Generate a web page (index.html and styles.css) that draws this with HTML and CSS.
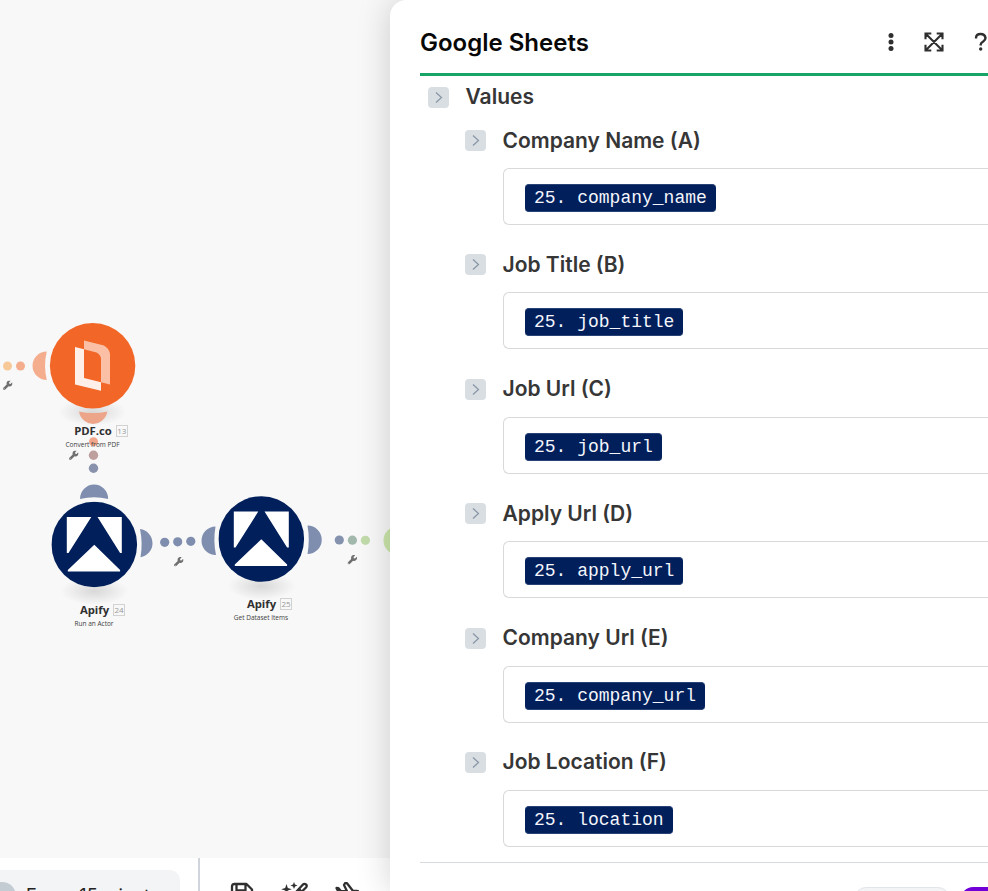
FILE: index.html
```html
<!DOCTYPE html>
<html lang="en">
<head>
<meta charset="utf-8">
<title>Scenario editor</title>
<link rel="stylesheet" href="styles.css">
</head>
<body>
<main class="workspace">
  <section class="editor">
    <div class="canvas">
      <svg class="graph" width="400" height="858" viewBox="0 0 400 858" aria-hidden="true">
        <defs>
          <radialGradient id="shade"><stop offset="0" stop-color="#000" stop-opacity=".13"/><stop offset="1" stop-color="#000" stop-opacity="0"/></radialGradient>
          <symbol id="wrench" viewBox="0 0 512 512"><path fill="#707070" d="M507 115c-3-12-19-15-27-7l-74 74-68-11-11-68 74-74c9-9 5-24-7-27C339-12 279 2 237 44c-45 45-58 110-38 167L22 388c-29 29-29 73 0 102s73 29 102 0l177-177c57 20 122 7 168-39 42-42 56-103 38-159zM64 472a24 24 0 1 1 0-48 24 24 0 0 1 0 48z"/></symbol>
          <symbol id="apify" viewBox="0 0 86 86"><circle cx="43" cy="43" r="42.8" fill="#001f5b"/><path fill="#fff" d="M15.500 15.500H40L17.200 51.500h-1.700zM46.200 15.500H70.500V51.500H68.800zM43 43.300L68.800 68.600V70H16.500V68.600z"/></symbol>
        </defs>
        <ellipse cx="92.500" cy="412" rx="34" ry="14" fill="url(#shade)"/>
        <ellipse cx="94.500" cy="591" rx="34" ry="14" fill="url(#shade)"/>
        <ellipse cx="261.500" cy="586" rx="34" ry="14" fill="url(#shade)"/>
        <circle cx="7.500" cy="366" r="4.500" fill="#f8c998"/>
        <circle cx="20.500" cy="366" r="4.500" fill="#f5ae8d"/>
        <path fill="#f5ae8d" d="M46.800 351.500a14.300 14.250 0 0 0 0 28.500q-3.500-14.200 0-28.500z"/>
        <path fill="#eda589" d="M79 411.500a14.300 14.500 0 0 0 28.300 0q-14 3-28.300 0z"/>
        <circle cx="93.500" cy="441.800" r="4.500" fill="#f1a58b"/>
        <circle cx="93.500" cy="455.200" r="4.700" fill="#bd9f9d"/>
        <circle cx="93.500" cy="468.200" r="4.700" fill="#8992ac"/>
        <path fill="#7f8eae" d="M80 499a14.100 14.500 0 0 1 28.200 0q-14-3.500-28.200 0z"/>
        <path fill="#7f8eae" d="M140 529a14.300 14.300 0 0 1 .5 28.300q2.500-14.200-.5-28.300z"/>
        <g fill="#7f8eae"><circle cx="164.700" cy="542.300" r="4.600"/><circle cx="177.700" cy="541.800" r="4.600"/><circle cx="190.800" cy="541.300" r="4.600"/></g>
        <path fill="#7f8eae" d="M215.500 526.500a14.200 14.200 0 0 0 .5 28.500q-3-14-.5-28.500z"/>
        <path fill="#7f8eae" d="M307.500 525.500a14.200 14.200 0 0 1 0 28.500q2.500-14.200 0-28.500z"/>
        <circle cx="339.300" cy="540" r="4.600" fill="#8492ad"/>
        <circle cx="352.400" cy="540.200" r="4.600" fill="#a2b8ad"/>
        <circle cx="365.400" cy="540.300" r="4.600" fill="#c1dbaa"/>
        <circle cx="397.500" cy="540.500" r="14" fill="#cbe6ab"/>
        <circle cx="92.600" cy="365.700" r="42.700" fill="#f26727"/>
        <path fill="#fff" fill-opacity=".9" d="M75 347l9 2.300V378l17 4.200v8.600L75 384.500z"/>
        <path fill="#fff" fill-opacity=".58" d="M84 340.500l20 5q6 4 6 9v30l-9-2.300V359q0-4-4.500-6.500L84 349.300z"/>
        <use href="#apify" x="51.300" y="501.500" width="86" height="86"/>
        <use href="#apify" x="218.300" y="496" width="86" height="86"/>
        <use href="#wrench" x="3" y="380.500" width="9.500" height="9.500"/>
        <use href="#wrench" x="69" y="450.500" width="9.500" height="9.500"/>
        <use href="#wrench" x="174" y="557" width="9.500" height="9.500"/>
        <use href="#wrench" x="347.500" y="555" width="9.500" height="9.500"/>
      </svg>
      <div class="caption caption-pdf"><h3>PDF.co <span>13</span></h3><p>Convert from PDF</p></div>
      <div class="caption caption-run"><h3>Apify <span>24</span></h3><p>Run an Actor</p></div>
      <div class="caption caption-get"><h3>Apify <span>25</span></h3><p>Get Dataset Items</p></div>
    </div>
    <footer class="toolbar">
      <div class="schedule"><i class="toggle"></i><span>Every 15 minutes</span></div>
      <div class="tools">
        <svg viewBox="0 0 24 24"><path d="M4.500 2h12L22 7.500v12q0 2.500-2.500 2.500h-15Q2 22 2 19.500v-15Q2 2 4.500 2zM6.500 2v6.500h9V2"/></svg>
        <svg class="wand" viewBox="0 0 28 24"><path d="M3 23L22 2.500q1.500-1.200 3 0t0 3L7 23M18 7l3 3"/><path class="solid" d="M5.500 2l1.300 4 4 1.300-4 1.300-1.300 4-1.300-4-4-1.300 4-1.300zM13 0l1 2.500 2.500 1-2.500 1-1 2.500-1-2.500-2.500-1 2.500-1z"/></svg>
        <svg class="plane" viewBox="0 0 24 24"><path d="M1.500 6l2 .2 2.500 3h6L9 3l1-1.800h2L18 9h4q2 0 2 2t-2 2h-4l-6 8H8l3-8H5L1.500 6z"/></svg>
      </div>
    </footer>
  </section>
  <aside class="panel">
    <header class="panel-head">
      <h1>Google Sheets</h1>
      <div class="actions">
        <svg width="8" height="20" viewBox="0 0 8 20" fill="#2f2f2f"><circle cx="4" cy="3.500" r="2.500"/><circle cx="4" cy="10" r="2.500"/><circle cx="4" cy="16.500" r="2.500"/></svg>
        <svg class="expand" width="20" height="20" viewBox="0 0 20 20"><path d="M2 2l16 16M18 2L2 18M1.500 7.300V1.500h5.800M12.700 1.500h5.800v5.800M18.500 12.700v5.800h-5.800M7.300 18.500H1.500v-5.800"/></svg>
        <svg class="help" width="14" height="20" viewBox="0 0 14 20"><path d="M2 6.500V6Q2 2 6.500 2T11.500 6q0 2-2.300 3.500Q6.700 11 6.700 12.500v1"/><circle cx="6.700" cy="17" r="1.700"/></svg>
      </div>
    </header>
    <div class="fields">
      <h2 class="row root"><i class="chevron"><svg viewBox="0 0 21 21"><path d="M8 5.500l5.500 5L8 15.500"/></svg></i><span>Values</span></h2>
      <section class="field"><h2 class="row"><i class="chevron"><svg viewBox="0 0 21 21"><path d="M8 5.500l5.500 5L8 15.500"/></svg></i><span>Company Name (A)</span></h2><div class="input"><span class="chip">25. company_name</span></div></section>
      <section class="field"><h2 class="row"><i class="chevron"><svg viewBox="0 0 21 21"><path d="M8 5.500l5.500 5L8 15.500"/></svg></i><span>Job Title (B)</span></h2><div class="input"><span class="chip">25. job_title</span></div></section>
      <section class="field"><h2 class="row"><i class="chevron"><svg viewBox="0 0 21 21"><path d="M8 5.500l5.500 5L8 15.500"/></svg></i><span>Job Url (C)</span></h2><div class="input"><span class="chip">25. job_url</span></div></section>
      <section class="field"><h2 class="row"><i class="chevron"><svg viewBox="0 0 21 21"><path d="M8 5.500l5.500 5L8 15.500"/></svg></i><span>Apply Url (D)</span></h2><div class="input"><span class="chip">25. apply_url</span></div></section>
      <section class="field"><h2 class="row"><i class="chevron"><svg viewBox="0 0 21 21"><path d="M8 5.500l5.500 5L8 15.500"/></svg></i><span>Company Url (E)</span></h2><div class="input"><span class="chip">25. company_url</span></div></section>
      <section class="field"><h2 class="row"><i class="chevron"><svg viewBox="0 0 21 21"><path d="M8 5.500l5.500 5L8 15.500"/></svg></i><span>Job Location (F)</span></h2><div class="input"><span class="chip">25. location</span></div></section>
    </div>
    <footer class="panel-foot"><span class="button"></span><span class="button primary"></span></footer>
  </aside>
</main>
</body>
</html>
```
FILE: styles.css
```css
* { box-sizing: border-box; }
body { margin: 0; font-family: Inter, sans-serif; background: #f8f8f8; }
h1, h2, h3, p { margin: 0; }
svg { display: block; }
.workspace { display: grid; grid-template-columns: 390px 598px; height: 891px; overflow: hidden; }
.editor { display: grid; grid-template-rows: 858px 33px; min-width: 0; height: 891px; }
.canvas { position: relative; background: #f8f8f8; min-width: 0; }
.caption { position: absolute; width: 120px; text-align: center; font-family: "Open Sans", sans-serif; color: #303030; }
.caption h3 { display: flex; justify-content: center; align-items: center; gap: 4px; height: 16px; font-size: 11.3px; font-weight: 700; line-height: 16px; }
.caption h3 span { border: 1px solid #d2d2d2; width: 12px; height: 12px; font-size: 8px; line-height: 10px; font-weight: 400; color: #999; }
.caption p { font-size: 6.5px; line-height: 10px; color: #404040; }
.caption-pdf { left: 41px; top: 423px; }
.caption-run { left: 42.500px; top: 602px; }
.caption-get { left: 209.500px; top: 596px; }
.caption p { margin: 1px 0 0 -17px; }
.toolbar { display: flex; background: #fff; overflow: hidden; }
.schedule { position: relative; isolation: isolate; display: flex; flex: 0 0 200px; align-items: flex-start; border-right: 2px solid #cfd5db; height: 33px; padding-top: 12px; }
.schedule::before { content: ""; position: absolute; z-index: -1; left: 0; top: 12px; width: 180px; height: 40px; background: #f3f4f6; border-top-right-radius: 10px; }
.schedule span { padding: 11px 0 0 10px; font-size: 18px; line-height: 29px; color: #222; white-space: nowrap; }
.schedule .toggle { flex: 0 0 16px; height: 24px; margin-top: 12px; background: #c3cbd3; border-top-right-radius: 14px; }
.tools { display: flex; gap: 28px; padding: 24px 0 0 30px; }
.tools svg { flex: 0 0 24px; width: 24px; height: 24px; fill: none; stroke: #303030; stroke-width: 2.300; stroke-linejoin: round; }
.tools .wand { flex-basis: 28px; width: 28px; margin-left: -1px; }
.tools .plane { margin-left: -2px; }
.tools .solid { fill: #303030; stroke: none; }
.panel { position: relative; display: flex; flex-direction: column; height: 891px; padding-left: 30px; background: #fff; border-top-left-radius: 16px; box-shadow: 0 0 34px rgba(0,0,0,.18); }
.panel-head { display: flex; flex: 0 0 76px; justify-content: space-between; align-items: flex-start; padding-top: 27px; border-bottom: 3px solid #17a566; }
.panel-head h1 { font-size: 24px; line-height: 32px; font-weight: 600; color: #080808; }
.actions { display: flex; align-items: center; height: 32px; margin: -1px 0 0; }
.actions .expand { margin: 0 30px 0 29px; fill: none; stroke: #2f2f2f; stroke-width: 2.100; }
.help path { fill: none; stroke: #2f2f2f; stroke-width: 2.400; }
.help circle { fill: #2f2f2f; }
.fields { flex: 0 0 786px; padding-left: 8px; overflow: hidden; }
.row { display: flex; align-items: center; gap: 16.500px; height: 43px; font-size: 21px; font-weight: 600; color: #363636; white-space: nowrap; }
.row span { padding-bottom: 1px; }
.root span { padding-bottom: 2px; }
.chevron { flex: 0 0 21px; height: 21px; border-radius: 4px; background: #d9dee3; }
.chevron path { fill: none; stroke: #8795a5; stroke-width: 1.200; }
.field { height: 124.400px; padding-left: 37px; }
.input { margin: 6px 0 0 38px; display: flex; align-items: center; height: 57px; padding: 3px 0 0 21px; border: 1px solid #d9d9d9; border-right: 0; border-radius: 6px 0 0 6px; }
.chip { height: 28px; padding: 0 9px; border: 1px solid #284276; border-width: 1px 0; border-radius: 4px; background: #001f5b; color: #f4f6fb; font: 18px/26px "Liberation Mono", monospace; white-space: nowrap; }
.panel-foot { display: flex; flex: 1; gap: 11px; align-items: flex-start; padding: 24px 0 0 434px; border-top: 1px solid #d6dbe0; overflow: hidden; }
.button { flex: 0 0 96px; height: 40px; border: 1px solid #e1e4e8; border-radius: 12px; background: #f3f4f6; }
.primary { border: 0; background: #7100d8; }
```
